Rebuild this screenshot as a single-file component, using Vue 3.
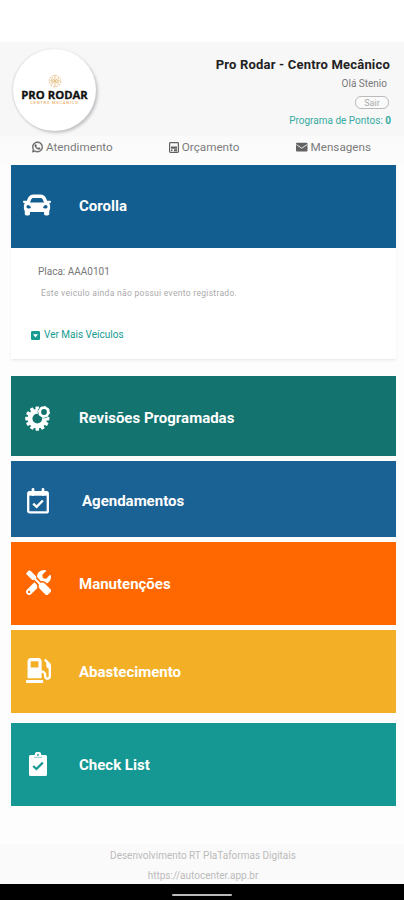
<script setup>
const tiles = [
  { label: 'Revisões Programadas', icon: 'gear', tone: 'green' },
  { label: 'Agendamentos', icon: 'calendar', tone: 'navy' },
  { label: 'Manutenções', icon: 'tools', tone: 'orange' },
  { label: 'Abastecimento', icon: 'fuel', tone: 'yellow' },
  { label: 'Check List', icon: 'clipboard', tone: 'teal' },
]
const teeth = Array.from({ length: 12 }, (_, i) => i * 30)
</script>

<template>
  <div class="screen">
    <header class="header">
      <div class="logo">
        <svg class="emblem" viewBox="0 0 16 14" fill="none" stroke="#e5c184" stroke-width="0.9">
          <circle cx="8" cy="7" r="5.8" stroke-dasharray="2 1" />
          <path d="M5 3v8M11 3v8M8 1v12M3 7h10M6 5l4 4M10 5L6 9" />
        </svg>
        <span class="brand">PRO RODAR</span>
        <span class="tagline">CENTRO MECÂNICO</span>
      </div>
      <div class="account">
        <h1 class="title">Pro Rodar - Centro Mecânico</h1>
        <span class="hello">Olá Stenio</span>
        <button class="exit">Sair</button>
        <span class="points">Programa de Pontos: <b>0</b></span>
      </div>
    </header>

    <nav class="nav">
      <a class="link">
        <svg viewBox="0 0 448 512" width="11" height="12" fill="currentColor" stroke="currentColor" stroke-width="18"><path d="M380.9 97.1C339 55.1 283.2 32 223.9 32c-122.4 0-222 99.6-222 222 0 39.1 10.2 77.3 29.6 111L0 480l117.7-30.9c32.4 17.7 68.9 27 106.1 27h.1c122.3 0 224.1-99.6 224.1-222 0-59.3-25.2-115-67.1-157zm-157 341.6c-33.2 0-65.7-8.9-94-25.7l-6.7-4-69.8 18.3L72 359.2l-4.4-7c-18.5-29.4-28.2-63.3-28.2-98.2 0-101.7 82.8-184.5 184.6-184.5 49.3 0 95.6 19.2 130.4 54.1 34.8 34.9 56.2 81.2 56.1 130.5 0 101.8-84.9 184.6-186.6 184.6zm101.2-138.2c-5.5-2.8-32.8-16.2-37.9-18-5.1-1.9-8.8-2.8-12.5 2.8-3.7 5.6-14.3 18-17.6 21.8-3.2 3.7-6.5 4.2-12 1.4-32.6-16.3-54-29.1-75.5-66-5.7-9.8 5.7-9.1 16.3-30.3 1.8-3.7.9-6.9-.5-9.7-1.4-2.8-12.5-30.1-17.1-41.2-4.5-10.8-9.1-9.3-12.5-9.5-3.2-.2-6.9-.2-10.6-.2-3.7 0-9.7 1.4-14.8 6.9-5.1 5.6-19.4 19-19.4 46.3 0 27.3 19.9 53.7 22.6 57.4 2.8 3.7 39.1 59.7 94.8 83.8 35.2 15.2 49 16.5 66.6 13.9 10.7-1.6 32.8-13.4 37.4-26.4 4.6-13 4.6-24.1 3.2-26.4-1.3-2.5-5-3.9-10.5-6.6z" /></svg>
        <span>Atendimento</span>
      </a>
      <a class="link">
        <svg viewBox="0 0 10 11" width="10" height="11"><rect x=".6" y=".6" width="8.800" height="9.800" rx=".8" fill="none" stroke="currentColor" stroke-width="1.2" /><path d="M2 4.500h6v2.300H2zM2 7.600h1.500v1.400H2zM5 7.200h3v2H5z" fill="currentColor" /></svg>
        <span>Orçamento</span>
      </a>
      <a class="link">
        <svg viewBox="0 0 12 10" width="12" height="10"><rect y=".8" width="11.500" height="8.600" rx="1" fill="currentColor" /><path d="M.4 2.600l5.300 3.600 5.300-3.600" fill="none" stroke="#f9f9f9" stroke-width=".9" /></svg>
        <span>Mensagens</span>
      </a>
    </nav>

    <section class="vehicle">
      <div class="vehicle-head">
        <span class="icon"><svg viewBox="0 0 512 512" width="28" height="28" fill="#fff"><path d="M499.99 176h-59.87l-16.64-41.6C406.38 91.63 365.57 64 319.5 64h-127c-46.06 0-86.88 27.63-103.99 70.4L71.87 176H12.01C4.2 176-1.53 183.34.37 190.91l6 24C7.7 220.25 12.5 224 18.01 224h20.07C24.65 235.73 16 252.78 16 272v48c0 16.12 6.16 30.67 16 41.93V416c0 17.67 14.33 32 32 32h32c17.67 0 32-14.33 32-32v-32h256v32c0 17.67 14.33 32 32 32h32c17.67 0 32-14.33 32-32v-54.07c9.84-11.25 16-25.8 16-41.93v-48c0-19.22-8.65-36.27-22.07-48H494c5.51 0 10.31-3.75 11.64-9.09l6-24c1.89-7.57-3.84-14.91-11.65-14.91zm-352.06-17.83c7.29-18.22 24.94-30.17 44.57-30.17h127c19.63 0 37.28 11.95 44.57 30.17L384 208H128l19.93-49.83zM96 319.8c-19.2 0-32-12.76-32-31.9S76.8 256 96 256s48 28.71 48 47.85-28.8 15.95-48 15.95zm320 0c-19.2 0-48 3.19-48-15.95S396.8 256 416 256s32 12.76 32 31.9-12.8 31.9-32 31.9z" /></svg></span>
        <span class="label">Corolla</span>
      </div>
      <div class="vehicle-body">
        <p class="plate">Placa: AAA0101</p>
        <p class="note">Este veiculo ainda não possui evento registrado.</p>
        <a class="more">
          <svg viewBox="0 0 10 10" width="9" height="9"><rect width="10" height="10" rx="1.3" fill="currentColor" /><path d="M2.2 3.600h5.600L5 7.200z" fill="#fff" /></svg>
          <span>Ver Mais Veículos</span>
        </a>
      </div>
    </section>

    <main class="tiles">
      <div v-for="t in tiles" :key="t.icon" class="tile" :class="t.tone">
        <span class="icon">
          <svg v-if="t.icon === 'gear'" viewBox="0 0 26 26" width="26" height="26">
            <g fill="#fff">
              <rect v-for="a in teeth" :key="a" x="10.5" y="1.5" width="3.6" height="5" rx=".8" :transform="`rotate(${a} 12.3 13.6)`" />
            </g>
            <circle cx="12.3" cy="13.6" r="7.3" fill="none" stroke="#fff" stroke-width="4.8" />
            <circle cx="19" cy="7" r="6.3" class="cutout" />
            <circle cx="19" cy="7" r="4.3" fill="none" stroke="#fff" stroke-width="2.8" />
            <circle cx="19" cy="7" r="5.6" fill="none" stroke="#fff" stroke-width=".8" stroke-dasharray="2 2.3" />
          </svg>
          <svg v-else-if="t.icon === 'calendar'" viewBox="0 0 22 26" width="22" height="26" fill="none" stroke="#fff">
            <rect x="1.2" y="4.2" width="19.6" height="20.2" rx="1.5" stroke-width="2.3" />
            <path d="M1 5.700h20" stroke-width="4" />
            <path d="M6 1.500v5M16 1.500v5" stroke-width="2.800" stroke-linecap="round" />
            <path d="M6.200 15.600l3.400 3.200 6.300-6.300" stroke-width="2.400" />
          </svg>
          <svg v-else-if="t.icon === 'tools'" viewBox="0 0 512 512" width="25" height="25" fill="#fff"><path d="M501.1 395.7L384 278.6c-23.100-23.100-57.600-27.600-85.400-13.900L206 172l4-38L92 16Q72 0 52 16L14 54Q-4 74 14 94L128 206l42-4 96.700 96.600c-13.600 27.800-9.200 62.300 13.900 85.400l117.100 117.100c14.600 14.600 38.200 14.600 52.700 0l52.700-52.700c14.500-14.600 14.500-38.200 0-52.700z" /><path d="M331.7 225c28.3 0 54.9 11 74.9 31l19.4 19.4c15.8-6.9 30.8-16.5 43.8-29.5 37.1-37.1 49.7-89.3 37.9-136.7-2.2-9-13.5-12.1-20.1-5.5l-74.4 74.4-67.9-11.3L334 98.9l74.4-74.4c6.6-6.6 3.4-17.9-5.7-20.2-47.4-11.7-99.600.9-136.600 37.9-28.500 28.500-41.900 66.100-41.200 103.600l82.100 82.100c8.100-1.900 16.500-2.900 24.700-2.900zm-103.900 82l-56.700-56.700L18.700 402.800c-25 25-25 65.500 0 90.500s65.500 25 90.500 0l123.600-123.600c-7.600-19.900-9.900-41.600-5-62.700zM64 472c-13.200 0-24-10.800-24-24 0-13.300 10.700-24 24-24s24 10.700 24 24c0 13.200-10.700 24-24 24z" /></svg>
          <svg v-else-if="t.icon === 'fuel'" viewBox="0 0 512 512" width="25" height="25" fill="#fff"><path d="M336 448H16c-8.8 0-16 7.2-16 16v32c0 8.8 7.2 16 16 16h320c8.8 0 16-7.2 16-16v-32c0-8.8-7.2-16-16-16zm157.2-340.7l-81-81c-6.2-6.2-16.4-6.2-22.6 0l-11.3 11.3c-6.2 6.2-6.2 16.4 0 22.6L416 97.9V160c0 28.1 20.9 51.3 48 55.2V376c0 13.2-10.8 24-24 24s-24-10.8-24-24v-32c0-48.6-39.4-88-88-88h-8V64c0-35.3-28.7-64-64-64H96C60.7 0 32 28.7 32 64v352h288V304h8c22.1 0 40 17.9 40 40v27.8c0 37.7 27 72 64.5 75.9 43 4.3 79.5-29.5 79.5-71.7V152.6c0-17-6.8-33.3-18.8-45.3zM256 192H96V64h160v128z" /></svg>
          <svg v-else viewBox="0 0 18 24" width="18" height="24">
            <path d="M1.500 3h4.200a3.300 3.300 0 0 1 6.600 0h4.200A1.500 1.500 0 0 1 18 4.500v18a1.500 1.500 0 0 1-1.500 1.500h-15A1.500 1.500 0 0 1 0 22.500v-18A1.500 1.500 0 0 1 1.500 3z" fill="#fff" />
            <path d="M5 5.300h8" stroke="#159793" stroke-width=".5" />
            <circle cx="9" cy="2.900" r=".9" fill="#159793" />
            <path d="M4.200 14l3.200 3 6.400-6.400" fill="none" stroke="#159793" stroke-width="2.200" />
          </svg>
        </span>
        <span class="label" :class="t.icon">{{ t.label }}</span>
      </div>
    </main>

    <footer class="footer">
      <span class="dev">Desenvolvimento RT PlaTaformas Digitais</span>
      <span class="url">https://autocenter.app.br</span>
    </footer>
    <div class="system-bar"><span class="handle"></span></div>
  </div>
</template>

<style>
body { margin: 0; background: #fff; }
</style>

<style scoped>
.screen {
  box-sizing: border-box;
  width: 404px;
  height: 900px;
  padding-top: 42px;
  display: flex;
  flex-direction: column;
  overflow: hidden;
  background: #fdfdfd;
  background-image: linear-gradient(#fff 42px, transparent 42px);
  font-family: Roboto, "Liberation Sans", sans-serif;
  color: #666;
}
.screen > * { flex-shrink: 0; }
p, h1 { margin: 0; }
svg { display: block; flex: none; }
span, a, p, h1 { white-space: nowrap; }
.header {
  box-sizing: border-box;
  height: 94px;
  padding: 7px 14px 0 13px;
  display: flex;
  justify-content: space-between;
  background: #f7f7f7;
}
.logo {
  box-sizing: border-box;
  width: 83px;
  height: 82px;
  padding-top: 25px;
  border-radius: 50%;
  background: #fff;
  box-shadow: 2px 2px 3px #c3c4c7, -1px 0 2px #ddd;
  display: flex;
  flex-direction: column;
  align-items: center;
}
.emblem { width: 16px; height: 14px; }
.brand {
  margin-top: 2px;
  font: 700 11.3px/10px "Open Sans", sans-serif;
  color: #111;
  -webkit-text-stroke: .3px #111;
}
.tagline { margin-top: 1px; font-size: 4px; line-height: 4px; letter-spacing: .8px; color: #e39b3c; }
.account { display: flex; flex-direction: column; align-items: flex-end; }
.title { margin-top: 8px; font-size: 13px; line-height: 16px; font-weight: 700; letter-spacing: .19px; color: #222; }
.hello { margin: 5px 3px 0 0; font-size: 10px; line-height: 12px; color: #777; }
.exit {
  box-sizing: border-box;
  width: 34px;
  height: 13px;
  margin: 6px 1px 0 0;
  padding: 0;
  border: 1px solid #bbb;
  border-radius: 6px;
  background: #fafafa;
  font: 9px/10px Roboto, sans-serif;
  color: #aaa;
}
.points { margin: 6px -1px 0 0; font-size: 10px; line-height: 12px; color: #36aaa2; }
.nav {
  height: 29px;
  padding: 0 33px 0 32px;
  display: flex;
  justify-content: space-between;
  background: linear-gradient(#fafafa, #fcfcfc);
  font-size: 11.7px;
}
.link { display: flex; align-items: center; gap: 3px; height: 22px; color: #626262; }
.link span { color: #7c7c7c; }
.vehicle { margin: 0 8px 0 11px; height: 194px; background: #fff; box-shadow: 0 2px 3px -1px #e2e2e2; }
.vehicle-head {
  box-sizing: border-box;
  height: 83px;
  padding-bottom: 1px;
  display: flex;
  align-items: center;
  background: #125e90;
}
.icon { box-sizing: border-box; width: 68px; padding-right: 14px; display: flex; justify-content: center; }
.vehicle-head .icon { padding: 0 16px 3px 0; }
.label { color: #fff; font-size: 15px; line-height: 20px; font-weight: 700; }
.vehicle-body { padding: 18px 0 0 27px; }
.plate { font-size: 10px; line-height: 12px; color: #777; }
.note { margin: 10px 0 0 3px; font-size: 8.5px; line-height: 11px; letter-spacing: .3px; color: #aaa; }
.more {
  margin: 30px 0 0 -7px;
  display: flex;
  align-items: center;
  gap: 4px;
  font-size: 10px;
  line-height: 12px;
  color: #159b91;
}
.tiles { margin: 17px 8px 0 11px; display: flex; flex-direction: column; gap: 5px; }
.tile { box-sizing: border-box; height: 83px; display: flex; align-items: center; }
.green { height: 80px; padding-top: 3px; background: #12736f; }
.navy { height: 76px; padding-top: 3px; background: #1b6294; }
.orange { background: #ff6800; }
.yellow { background: #f3b027; }
.teal { margin-top: 5px; background: #159793; }
.orange .icon, .yellow .icon, .teal .icon { padding-bottom: 2px; }
.cutout { fill: #12736f; }
.label.calendar { margin-left: 3px; }
.footer {
  box-sizing: border-box;
  margin-top: auto;
  height: 40px;
  padding-top: 2px;
  display: flex;
  flex-direction: column;
  align-items: center;
  background: #fafafa;
  font-size: 10px;
  line-height: 19.5px;
  color: #bbb;
}
.dev { padding-left: 2px; }
.url { padding-left: 2px; }
.system-bar { height: 16px; background: #000; display: flex; justify-content: center; }
.handle { width: 60px; height: 2px; margin-top: 10px; background: #bbb; border-radius: 1px; }
</style>
